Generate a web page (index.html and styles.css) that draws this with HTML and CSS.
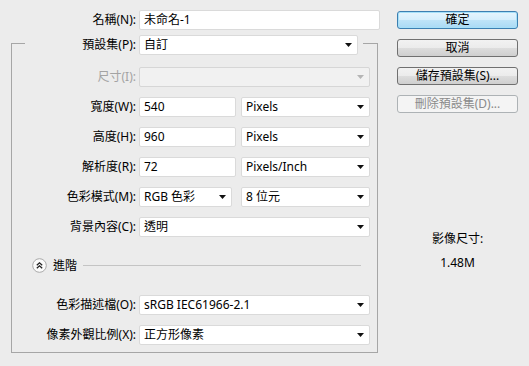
FILE: index.html
```html
<!DOCTYPE html>
<html lang="zh-Hant">
<head>
<meta charset="utf-8">
<title>新增</title>
<link rel="stylesheet" href="styles.css">
</head>
<body>
<div class="dialog">
  <div class="main">
    <div class="row">
      <span class="label label-top">名稱(N):</span>
      <div class="field w-name">未命名-1</div>
    </div>

    <div class="group">
      <div class="preset-row">
        <span class="label label-preset">預設集(P):</span>
        <div class="select w-preset"><span>自訂</span><svg class="arrow" width="7" height="4" viewBox="0 0 7 4"><polygon points="0,0 7,0 3.5,4"/></svg></div>
      </div>

      <div class="row g-row first">
        <span class="label disabled">尺寸(I):</span>
        <div class="select w-full is-disabled"><span></span><svg class="arrow" width="7" height="4" viewBox="0 0 7 4"><polygon points="0,0 7,0 3.5,4"/></svg></div>
      </div>

      <div class="row g-row">
        <span class="label">寬度(W):</span>
        <div class="field w-value">540</div>
        <div class="select w-unit"><span>Pixels</span><svg class="arrow" width="7" height="4" viewBox="0 0 7 4"><polygon points="0,0 7,0 3.5,4"/></svg></div>
      </div>

      <div class="row g-row">
        <span class="label">高度(H):</span>
        <div class="field w-value">960</div>
        <div class="select w-unit"><span>Pixels</span><svg class="arrow" width="7" height="4" viewBox="0 0 7 4"><polygon points="0,0 7,0 3.5,4"/></svg></div>
      </div>

      <div class="row g-row">
        <span class="label">解析度(R):</span>
        <div class="field w-value">72</div>
        <div class="select w-unit"><span>Pixels/Inch</span><svg class="arrow" width="7" height="4" viewBox="0 0 7 4"><polygon points="0,0 7,0 3.5,4"/></svg></div>
      </div>

      <div class="row g-row">
        <span class="label">色彩模式(M):</span>
        <div class="select w-mode"><span>RGB 色彩</span><svg class="arrow" width="7" height="4" viewBox="0 0 7 4"><polygon points="0,0 7,0 3.5,4"/></svg></div>
        <div class="select w-unit gap-wide"><span>8 位元</span><svg class="arrow" width="7" height="4" viewBox="0 0 7 4"><polygon points="0,0 7,0 3.5,4"/></svg></div>
      </div>

      <div class="row g-row">
        <span class="label">背景內容(C):</span>
        <div class="select w-full"><span>透明</span><svg class="arrow" width="7" height="4" viewBox="0 0 7 4"><polygon points="0,0 7,0 3.5,4"/></svg></div>
      </div>

      <div class="advanced">
        <span class="adv-btn"><svg width="15" height="15" viewBox="0 0 15 15"><circle cx="7.5" cy="7.5" r="6.8" fill="#fbfbfb" stroke="#a9a9a9" stroke-width="1"/><polyline points="4.8,7.2 7.5,4.8 10.2,7.2" fill="none" stroke="#222" stroke-width="1.3"/><polyline points="4.8,10.2 7.5,7.8 10.2,10.2" fill="none" stroke="#222" stroke-width="1.3"/></svg></span>
        <span class="adv-text">進階</span>
        <span class="adv-line"></span>
      </div>

      <div class="row g-row profile">
        <span class="label">色彩描述檔(O):</span>
        <div class="select w-full"><span>sRGB IEC61966-2.1</span><svg class="arrow" width="7" height="4" viewBox="0 0 7 4"><polygon points="0,0 7,0 3.5,4"/></svg></div>
      </div>

      <div class="row g-row">
        <span class="label">像素外觀比例(X):</span>
        <div class="select w-full"><span>正方形像素</span><svg class="arrow" width="7" height="4" viewBox="0 0 7 4"><polygon points="0,0 7,0 3.5,4"/></svg></div>
      </div>
    </div>
  </div>

  <div class="side">
    <button class="btn btn-default">確定</button>
    <button class="btn">取消</button>
    <button class="btn">儲存預設集(S)...</button>
    <button class="btn" disabled>刪除預設集(D)...</button>
    <div class="info">
      <div class="info-title">影像尺寸:</div>
      <div class="info-value">1.48M</div>
    </div>
  </div>
</div>
</body>
</html>
```

FILE: styles.css
```css
* { box-sizing: border-box; }

html, body {
  margin: 0;
  padding: 0;
  background: #ececec;
}

body {
  font-family: "Noto Sans", "Noto Sans CJK TC", sans-serif;
  font-size: 12px;
  color: #000;
  line-height: 14px;
}

.dialog {
  display: flex;
  width: 529px;
  height: 366px;
}

.main {
  width: 380px;
  padding-top: 10px;
}

.row {
  display: flex;
  align-items: center;
  height: 20px;
}

.label {
  flex: none;
  text-align: right;
  margin-right: 3px;
  white-space: nowrap;
}

.label-top { width: 136px; }
.label-preset { width: 111px; }
.g-row .label { width: 124px; }

.disabled { color: #a3a3a3; }

.field,
.select {
  height: 20px;
  background: #fff;
  border: 1px solid #dadada;
  border-radius: 2px;
  padding-left: 4px;
  display: flex;
  align-items: center;
  white-space: nowrap;
  flex: none;
}

.select .arrow {
  margin-left: auto;
  margin-right: 5px;
  fill: #111;
  flex: none;
}

.select.is-disabled {
  background: #f1f1f1;
  border-color: #d6d6d6;
}
.select.is-disabled .arrow { fill: #b5b5b5; }

.w-name { width: 241px; }
.w-preset { width: 219px; }
.w-full { width: 231px; }
.w-value { width: 97px; }
.w-unit { width: 129px; margin-left: 5px; }
.w-mode { width: 93px; }
.w-unit.gap-wide { margin-left: 9px; }

.group {
  margin-top: 13px;
  margin-left: 11px;
  width: 367px;
  height: 310px;
  border: 1px solid #a6a6a6;
  padding-bottom: 8px;
}

.preset-row {
  display: flex;
  align-items: center;
  height: 22px;
  margin: -10px 14px 0 13px;
  padding-right: 5px;
  background: #ececec;
}

.g-row { margin-top: 10px; }
.g-row.first { margin-top: 11px; }

.advanced {
  display: flex;
  align-items: center;
  height: 15px;
  margin-top: 21px;
  margin-left: 20px;
  margin-right: 16px;
}

.adv-btn {
  display: flex;
  width: 15px;
  height: 15px;
}

.adv-text {
  margin-left: 6px;
}

.adv-line {
  flex: 1;
  height: 1px;
  background: #c4c4c4;
  margin-left: 6px;
}

.g-row.profile { margin-top: 22px; }

.side {
  margin-left: 17px;
  width: 121px;
  padding-top: 11px;
  display: flex;
  flex-direction: column;
}

.btn {
  font-family: inherit;
  font-size: 12px;
  line-height: 14px;
  height: 18px;
  width: 121px;
  padding: 0;
  margin: 0 0 10px 0;
  border: 1px solid #707070;
  border-radius: 3px;
  color: #000;
  background: linear-gradient(#f2f2f2 0%, #ebebeb 50%, #dddddd 51%, #cfcfcf 100%);
}

.btn-default {
  border-color: #3c7fb1;
  background: linear-gradient(#e6f5fd 0%, #d4eefc 50%, #bfe4f8 51%, #a9daf5 100%);
  box-shadow: inset 0 0 0 1px #a6e0f8;
}

.btn:disabled {
  border-color: #adb2b5;
  background: #f4f4f4;
  color: #8a8a8a;
}

.info {
  margin-top: 109px;
  text-align: center;
}

.info-title { height: 14px; }
.info-value { margin-top: 10px; }
```
